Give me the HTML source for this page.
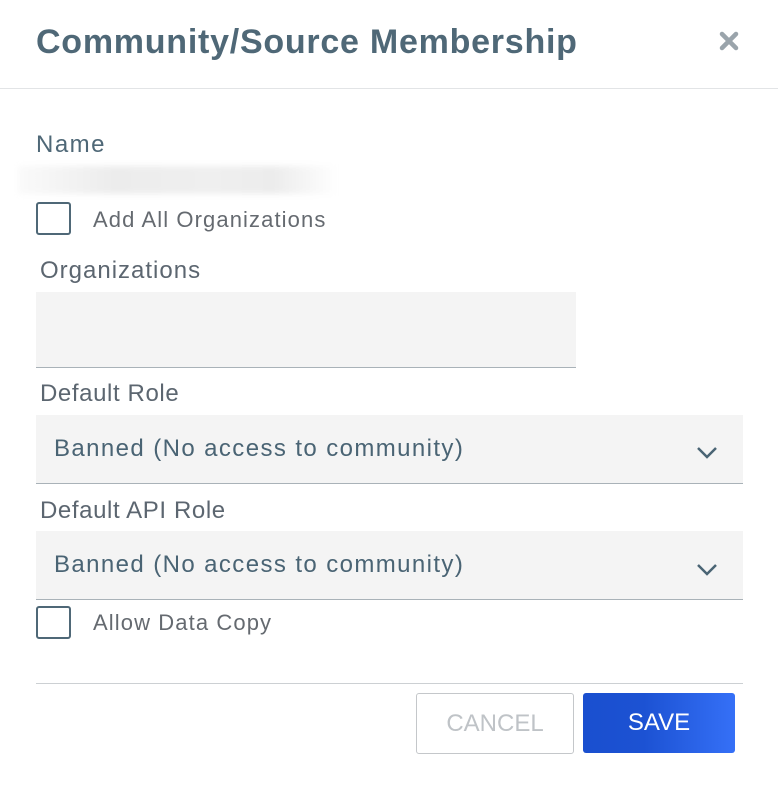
<!DOCTYPE html>
<html><head><style>
*{margin:0;padding:0;box-sizing:border-box}
body{width:778px;height:796px;background:#fff;font-family:"Liberation Sans",sans-serif;position:relative;overflow:hidden}
.a{position:absolute}
.t{left:36px;top:23px;font-size:34px;font-weight:bold;color:#4f6877;letter-spacing:0.75px}
.lbl{font-size:24px;color:#5c6670;letter-spacing:0.6px}
.sel{left:36px;width:707px;height:69px;background:#f4f4f4;border-bottom:1px solid #a9b2b8}
.sel span{position:absolute;left:18px;top:20px;font-size:24px;color:#4a6474;letter-spacing:1.4px}
.cb{width:35px;height:33px;border:2.5px solid #4f6877;border-radius:3px;left:36px}
.cbl{left:93px;font-size:22px;color:#656a70;letter-spacing:1.1px}
</style></head><body>
<div class="a t">Community/Source Membership</div>
<svg class="a" style="left:719px;top:31px" width="20" height="20" viewBox="0 0 20 20"><path d="M3 3L17 17M17 3L3 17" stroke="#9aa4ab" stroke-width="4.5" stroke-linecap="round"/></svg>
<div class="a" style="left:0;top:88px;width:778px;height:1px;background:#e2e4e6"></div>
<div class="a lbl" style="left:36px;top:131px;color:#4f6877;letter-spacing:1.5px">Name</div>
<div class="a" style="left:18px;top:166px;width:320px;height:28px;background:linear-gradient(90deg,#fafafa,#ececec 30%,#efefef 60%,#ececec 80%,#fff);filter:blur(3px)"></div>
<div class="a cb" style="top:202px"></div>
<div class="a cbl" style="top:207px">Add All Organizations</div>
<div class="a lbl" style="left:40px;top:257px;letter-spacing:1px">Organizations</div>
<div class="a" style="left:36px;top:292px;width:540px;height:76px;background:#f4f4f4;border-bottom:1px solid #a9b2b8"></div>
<div class="a lbl" style="left:40px;top:380px">Default Role</div>
<div class="a sel" style="top:415px"><span>Banned (No access to community)</span></div>
<svg class="a" style="left:696px;top:446px" width="22" height="14" viewBox="0 0 22 14"><path d="M2 2L11 11L20 2" fill="none" stroke="#4a6474" stroke-width="2.5"/></svg>
<div class="a lbl" style="left:40px;top:497px">Default API Role</div>
<div class="a sel" style="top:531px"><span>Banned (No access to community)</span></div>
<svg class="a" style="left:696px;top:563px" width="22" height="14" viewBox="0 0 22 14"><path d="M2 2L11 11L20 2" fill="none" stroke="#4a6474" stroke-width="2.5"/></svg>
<div class="a cb" style="top:606px"></div>
<div class="a cbl" style="top:610px">Allow Data Copy</div>
<div class="a" style="left:36px;top:683px;width:707px;height:1px;background:#ccd0d3"></div>
<div class="a" style="left:416px;top:693px;width:158px;height:61px;border:1px solid #c4c7ca;border-radius:3px;color:#bfc3c7;font-size:24px;text-align:center;line-height:59px">CANCEL</div>
<div class="a" style="left:583px;top:693px;width:152px;height:60px;border-radius:3px;background:linear-gradient(90deg,#1a4fcf 0%,#1c52d3 40%,#3570f7 100%);color:#fff;font-size:24px;text-align:center;line-height:60px">SAVE</div>
</body></html>
